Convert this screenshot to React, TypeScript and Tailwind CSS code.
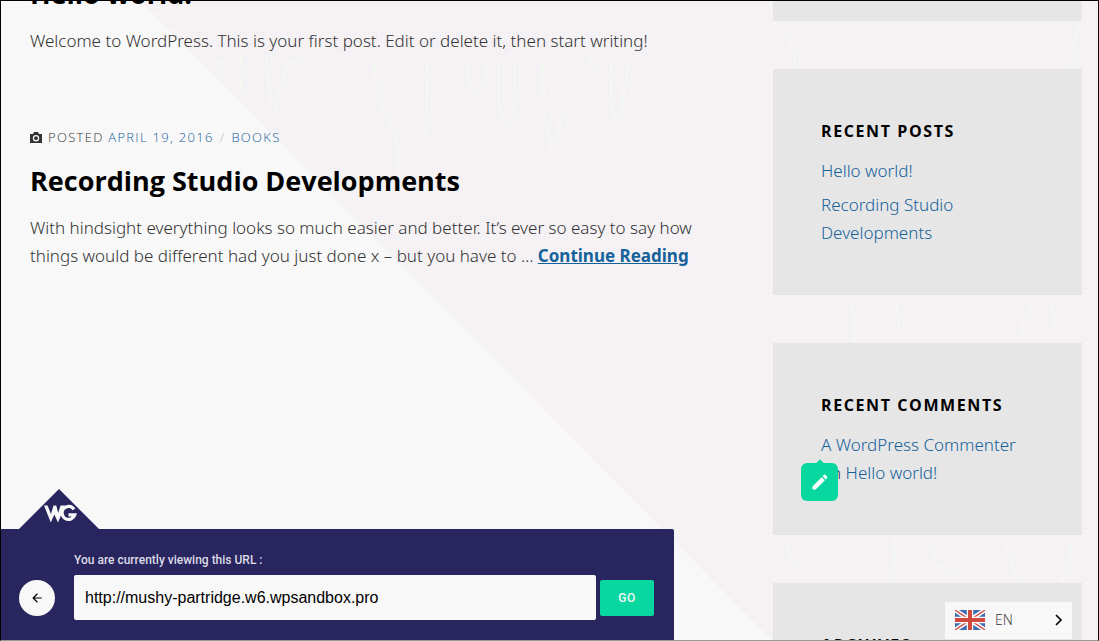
import type { ReactNode } from "react";
import { MdArrowBack, MdCreate } from "react-icons/md";

function Backdrop() {
  return (
    <svg className="absolute inset-0 -z-10 h-full w-full" aria-hidden="true">
      <defs>
        <pattern id="grain" width="4" height="2" patternUnits="userSpaceOnUse">
          <rect width="4" height="2" fill="#f3eff3" />
          <rect width="1" height="1" fill="#f8f8f8" />
          <rect x="2" width="1" height="1" fill="#f8f8f8" />
        </pattern>
      </defs>
      <rect width="100%" height="100%" fill="url(#grain)" />
      <g fill="none" stroke="#f3f8f1" strokeWidth="3" strokeDasharray="2 1">
        <path d="M373 60 l5 40 l14 28 l5 14 v28" />
        <path d="M426 60 v28 l-2 50" />
        <path d="M466 62 l2 24 l8 7 l8 -18 l4 -15" />
        <path d="M497 60 l1 45 l8 20 l6 -4 l2 -61" />
        <path d="M541 60 l3 60 l6 24 l6 -4 l6 -32" />
        <path d="M588 58 l6 10 M610 60 v40 l4 16 l6 -6 l8 -50" />
        <path d="M216 58 l3 24 M240 52 v48 M265 55 l4 40 l6 10 l10 -40 l20 -10" />
        <path d="M783 30 l8 12 l4 25 M1078 22 l-6 20 v26" />
        <path d="M850 300 l4 28 v14 M895 300 l4 30 M1030 300 l-12 38 M1050 300 l5 30" />
        <path d="M785 540 l8 28 M895 538 l-4 42 M925 542 l12 22 l18 6 M1005 540 l12 42 M1072 540 l-10 40" />
      </g>
      <path d="M0 0 H139 L773 641 H0 Z" fill="#f8f8f8" />
    </svg>
  );
}

function Widget({ title, children }: { title: string; children: ReactNode }) {
  return (
    <section className="bg-[#e6e6e6] px-12 py-12">
      <h2 className="font-['Open_Sans',sans-serif] text-base leading-7 font-bold tracking-widest text-black uppercase">{title}</h2>
      {children}
    </section>
  );
}

function CameraIcon() {
  return (
    <svg viewBox="0 0 12 11" className="mr-1.5 h-[11px] w-3" aria-hidden="true">
      <path fillRule="evenodd" fill="#333" d="M0 2 H3 L4 0 H8 L9 2 H12 V11 H0 Z M6 3 A3.200 3.200 0 1 0 6 9.400 A3.200 3.200 0 1 0 6 3 Z" />
      <circle cx="6" cy="6.200" r="1.900" fill="#333" />
    </svg>
  );
}

function Flag() {
  return (
    <svg viewBox="0 0 30 20" className="h-5 w-[30px]" aria-hidden="true">
      <rect width="30" height="20" fill="#3a6ab0" />
      <path d="M0 0 L30 20 M30 0 L0 20" stroke="#f8f8f8" strokeWidth="4.5" />
      <path d="M0 0 L30 20 M30 0 L0 20" stroke="#d1483c" strokeWidth="1.3" />
      <path d="M15 0 V20 M0 10 H30" stroke="#f8f8f8" strokeWidth="6.5" />
      <path d="M15 0 V20 M0 10 H30" stroke="#d1483c" strokeWidth="4" />
    </svg>
  );
}

function Logo() {
  return (
    <svg viewBox="0 0 80 40" className="ml-[18px] block h-10 w-20" role="img" aria-label="WG">
      <path d="M0 40 L40 0 L80 40 Z" fill="#28255f" />
      <path d="M25 16.500 H28.600 L32 25 L34.500 16.500 H37.300 L39.200 24 L41.500 16.500 H46 L39 33.500 L35.300 25.500 L31.800 33.500 Z" fill="#f8f8f8" />
      <path d="M55 20.300 A6.500 6.500 0 1 0 55.800 25.800 H49.500" fill="none" stroke="#f8f8f8" strokeWidth="3.2" />
    </svg>
  );
}

const link = "text-[#15629b]";

export default function App() {
  return (
    <div className="relative isolate h-screen overflow-hidden border border-black border-b-[#999] font-['Noto_Sans',sans-serif] text-[17px] leading-7 font-light text-[#333]">
      <Backdrop />
      <div className="flex justify-between pr-4 pl-[29px]">
        <main className="w-[700px]">
          <article>
            <h2 className="-mt-[25px] font-['Open_Sans',sans-serif] text-[27px] leading-9 font-bold text-black">Hello world!</h2>
            <p className="mt-[15px]">Welcome to WordPress. This is your first post. Edit or delete it, then start writing!</p>
          </article>
          <article className="mt-[68px]">
            <div className="flex items-center font-['Open_Sans',sans-serif] text-[13px] leading-7 tracking-widest uppercase">
              <CameraIcon />
              <span>Posted <a href="#" className={link}>April 19, 2016</a></span>
              <span className="mx-1.5 text-[#bbb]">/</span>
              <a href="#" className={link}>Books</a>
            </div>
            <h2 className="mt-3 font-['Open_Sans',sans-serif] text-[27px] leading-9 font-bold text-black">Recording Studio Developments</h2>
            <p className="mt-[15px]">
              With hindsight everything looks so much easier and better. It’s ever so easy to say how
              <br />
              things would be different had you just done x – but you have to …{" "}
              <a href="#" className="font-bold text-[#15629b] underline">Continue Reading</a>
            </p>
          </article>
        </main>
        <aside className="flex w-[309px] flex-col gap-12">
          <div className="h-5 bg-[#e6e6e6]" />
          <Widget title="Recent Posts">
            <ul className="mt-3 flex flex-col gap-1.5">
              <li><a href="#" className={link}>Hello world!</a></li>
              <li><a href="#" className={link}>Recording Studio<br />Developments</a></li>
            </ul>
          </Widget>
          <Widget title="Recent Comments">
            <p className="relative mt-3">
              <a href="#" className={link}>A WordPress Commenter</a>
              <br />
              <span className="text-[#28255f]">on</span> <a href="#" className={link}>Hello world!</a>
              <button type="button" aria-label="Edit translation" className="absolute top-8 -left-5 grid h-[38px] w-[37px] place-items-center rounded-md bg-[#08d79f] text-white">
                <span className="absolute -top-0.5 left-1/2 size-2 -translate-x-1/2 rotate-45 bg-[#08d79f]" />
                <MdCreate className="size-5" />
              </button>
            </p>
          </Widget>
          <Widget title="Archives"><p>April 2016</p></Widget>
        </aside>
      </div>

      <form className="absolute bottom-0 left-0 w-[673px] max-w-full font-[Roboto,sans-serif]" onSubmit={(e) => e.preventDefault()}>
        <Logo />
        <div className="rounded-tr-xs bg-[#28255f] pt-[21px] pr-5 pb-5 pl-[18px]">
          <label htmlFor="url" className="block pl-[55px] text-xs leading-5 font-medium text-[#dcdce6]">You are currently viewing this URL :</label>
          <div className="mt-[5px] flex items-center">
            <button type="button" aria-label="Back" className="mr-[19px] grid size-9 shrink-0 place-items-center rounded-full bg-[#f8f8f8] text-black">
              <MdArrowBack className="size-3.5" />
            </button>
            <input id="url" type="text" defaultValue="http://mushy-partridge.w6.wpsandbox.pro" className="h-[45px] min-w-0 flex-1 rounded-xs bg-[#f8f8f8] px-[11px] font-['Liberation_Sans',sans-serif] text-base font-normal text-black" />
            <button type="submit" className="ml-1 h-9 w-[54px] rounded-xs bg-[#08d79f] text-xs font-medium tracking-wider text-[#f8f8f8]">GO</button>
          </div>
        </div>
      </form>

      <button type="button" aria-label="Language: English" className="absolute right-[26px] bottom-px flex h-[37px] w-[127px] items-center bg-[#f8f8f8] pr-2 pb-0.5 pl-2.5 font-['Open_Sans',sans-serif] text-sm text-[#333]">
        <Flag />
        <span className="ml-2.5 flex-1 text-left">EN</span>
        <svg viewBox="0 0 10 12" className="h-3 w-2.5" fill="none" stroke="#000" strokeWidth="1.6" aria-hidden="true">
          <path d="M2 1 L7 6 L2 11" />
        </svg>
      </button>
    </div>
  );
}
